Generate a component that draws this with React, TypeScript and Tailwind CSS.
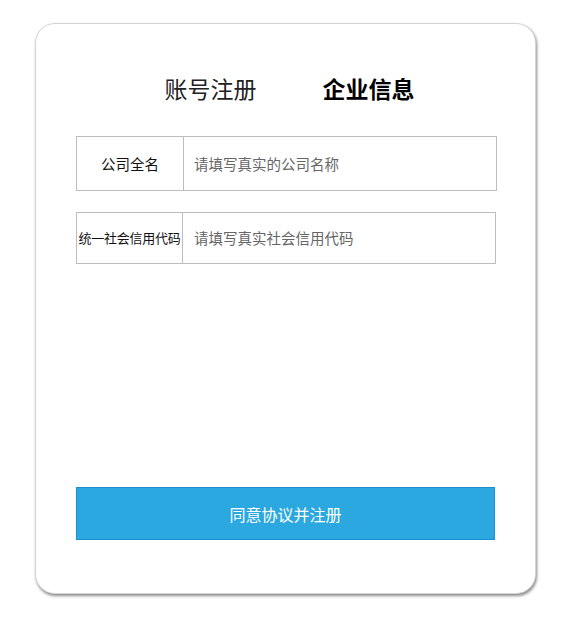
import React from "react";

export default function App() {
  const font = { fontFamily: '"Noto Sans CJK SC", "Noto Sans", sans-serif' };
  return (
    <div className="w-[575px] h-[625px] bg-white pt-[23px] pl-[35px]" style={font}>
      <div className="w-[501px] h-[571px] rounded-[20px] border border-[#d4d4d4] bg-white shadow-[1px_2px_3px_rgba(0,0,0,0.45)] px-[40px] flex flex-col">
        <div className="h-[112px] pt-[49px] flex justify-center items-start gap-[66px] pl-[8px]">
          <div className="text-[23px] leading-[30px] text-[#222]">账号注册</div>
          <div className="text-[23px] leading-[30px] font-bold text-black">企业信息</div>
        </div>
        <div className="w-[421px] h-[55px] border border-[#bdbdbd] flex">
          <div className="w-[107px] border-r border-[#bdbdbd] flex items-center justify-center text-[14.5px] text-[#111]">
            公司全名
          </div>
          <div className="flex-1 flex items-center pl-[10px] text-[14.5px] text-[#666]">请填写真实的公司名称</div>
        </div>
        <div className="mt-[21px] w-[420px] h-[52px] border border-[#bdbdbd] flex">
          <div className="w-[106px] border-r border-[#bdbdbd] flex items-center justify-center text-[13px] tracking-[-0.25px] text-[#111] whitespace-nowrap overflow-visible">
            统一社会信用代码
          </div>
          <div className="flex-1 flex items-center pl-[11px] text-[14.5px] text-[#666]">请填写真实社会信用代码</div>
        </div>
        <div className="mt-[223px] w-[419px] h-[53px] bg-[#2ca8e0] border border-[#1a90d4] flex items-center justify-center text-[16px] text-white">
          同意协议并注册
        </div>
      </div>
    </div>
  );
}
